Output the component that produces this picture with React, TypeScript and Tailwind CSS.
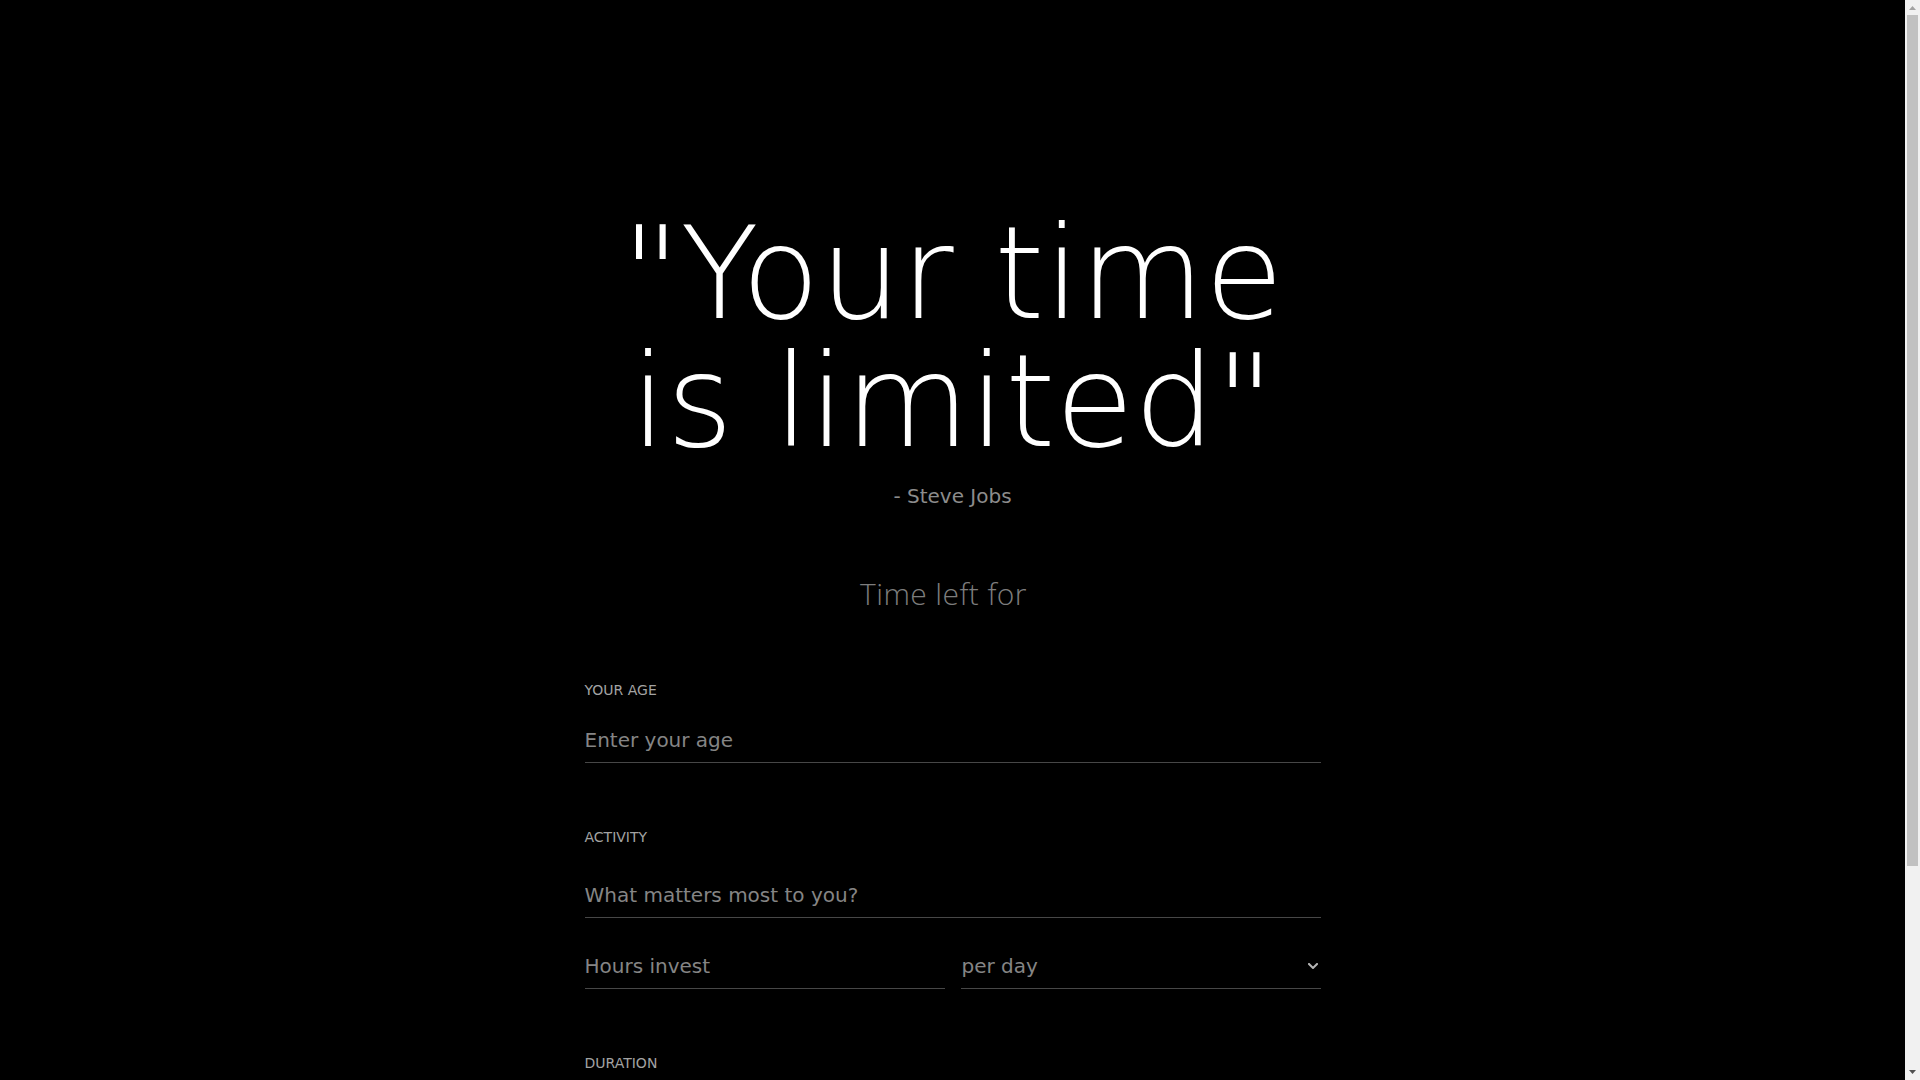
import { useState } from "react";

function Chevron() {
    return (
        <svg className="pointer-events-none absolute right-[3px] top-[19px] w-[10px] h-[6px] text-[#b5b5b5]" viewBox="0 0 10 6" fill="none" stroke="currentColor">
            <path d="M1 1l4 4 4-4" strokeWidth={2} strokeLinecap="square" />
        </svg>
    );
}

// page scrollbar, as it shows in the capture
function Scrollbar() {
    return (
        <div className="fixed right-0 top-0 h-screen w-[15px] bg-[#f1f1f1] flex flex-col items-center">
            <svg className="h-[15px] w-[15px] shrink-0 text-[#a3a3a3]" viewBox="0 0 15 15" fill="currentColor">
                <path d="M4 10h7L7.5 6z" />
            </svg>
            <div className="h-[851px] w-[11px] shrink-0 bg-[#c1c1c1]" />
            <div className="flex-1" />
            <svg className="h-[15px] w-[15px] shrink-0 text-[#505050]" viewBox="0 0 15 15" fill="currentColor">
                <path d="M4 5h7L7.5 9z" />
            </svg>
        </div>
    );
}

export default function App() {
    const [age, setAge] = useState("");
    const [activity, setActivity] = useState("");
    const [hours, setHours] = useState("");
    const [period, setPeriod] = useState("day");
    const [years, setYears] = useState("");

    const field =
        "w-full bg-transparent border-0 border-b border-[#474747] py-2 text-xl text-white outline-none placeholder:text-[#858585]";

    return (
        <div className="min-h-screen bg-black pr-[15px] text-white font-['DejaVu_Sans',sans-serif]">
            <main className="mx-auto max-w-3xl px-4 pt-[210px] pb-[197px]">
                <h1 className="text-center text-[128px] leading-none font-extralight">"Your time is limited"</h1>
                <p className="mt-4 text-center text-xl text-[#8c8c8c]">- Steve Jobs</p>
                <h2 className="mt-[66px] text-center text-3xl font-light tracking-[0.4px] text-[#7d7d7d] font-['Open_Sans',sans-serif]">
                    Time left for<span className="inline-block w-[18px]" />
                </h2>

                <form className="mt-[68px]" onSubmit={(e) => e.preventDefault()}>
                    <section>
                        <label className="block text-sm uppercase text-[#a3a3a3]">Your age</label>
                        <input
                            type="number"
                            value={age}
                            onChange={(e) => setAge(e.target.value)}
                            placeholder="Enter your age"
                            className={`mt-[18px] ${field}`}
                        />
                    </section>

                    <section className="mt-16 flex flex-col gap-[26px]">
                        <label className="block text-sm uppercase text-[#a3a3a3]">Activity</label>
                        <input
                            value={activity}
                            onChange={(e) => setActivity(e.target.value)}
                            placeholder="What matters most to you?"
                            className={field}
                        />
                        <div className="grid grid-cols-2 gap-4">
                            <input
                                type="number"
                                value={hours}
                                onChange={(e) => setHours(e.target.value)}
                                placeholder="Hours invest"
                                className={field}
                            />
                            <div className="relative">
                                <select
                                    value={period}
                                    onChange={(e) => setPeriod(e.target.value)}
                                    className="w-full appearance-none bg-transparent border-0 border-b border-[#474747] py-2 pl-px text-xl text-[#858585] outline-none"
                                >
                                    <option value="day">per day</option>
                                    <option value="week">per week</option>
                                    <option value="month">per month</option>
                                </select>
                                <Chevron />
                            </div>
                        </div>
                    </section>

                    <section className="mt-16">
                        <label className="block text-sm uppercase text-[#a3a3a3]">Duration</label>
                        <input
                            type="number"
                            value={years}
                            onChange={(e) => setYears(e.target.value)}
                            placeholder="For how many years?"
                            className={`mt-[18px] ${field}`}
                        />
                    </section>
                </form>
            </main>
            <Scrollbar />
        </div>
    );
}
